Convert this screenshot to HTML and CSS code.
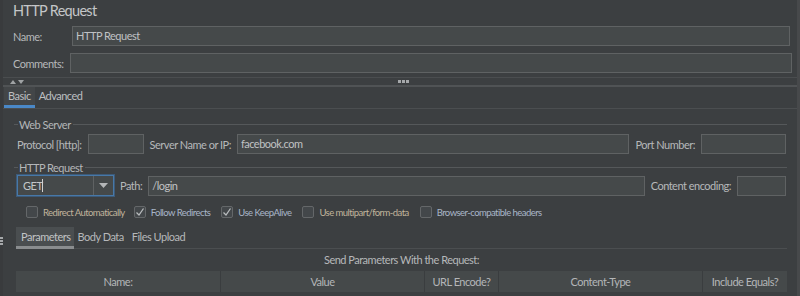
FILE: index.html
```html
<!DOCTYPE html>
<html>
<head>
<meta charset="utf-8">
<link rel="stylesheet" href="styles.css">
</head>
<body>
<div class="window">
  <div class="title">HTTP Request</div>
  <div class="row name-row">
    <span class="lbl name-lbl">Name:</span>
    <div class="field grow">HTTP Request</div>
  </div>
  <div class="row comments-row">
    <span class="lbl comments-lbl">Comments:</span>
    <div class="field grow"></div>
  </div>
  <div class="splitter">
    <div class="split-line"></div>
    <div class="split-mid">
      <svg class="arrows" width="18" height="6" viewBox="0 0 18 6"><path d="M2 5 L5 1 L8 5 Z" fill="#a0a3a5"/><path d="M10 1 L16 1 L13 5 Z" fill="#a0a3a5"/></svg>
      <span class="dots"><i></i><i></i><i></i></span>
    </div>
    <div class="split-line2"></div>
  </div>
  <div class="tabs">
    <div class="tab active">Basic</div>
    <div class="tab">Advanced</div>
  </div>
  <div class="panel">
    <div class="legend first"><span class="leg-pre"></span><span class="leg-text">Web Server</span><span class="leg-line"></span></div>
    <div class="row ws-row">
      <span class="lbl">Protocol [http]:</span>
      <div class="field w-proto"></div>
      <span class="lbl">Server Name or IP:</span>
      <div class="field grow">facebook.com</div>
      <span class="lbl">Port Number:</span>
      <div class="field w-port"></div>
    </div>
    <div class="legend second"><span class="leg-pre"></span><span class="leg-text">HTTP Request</span><span class="leg-line"></span></div>
    <div class="row req-row">
      <div class="combo">
        <span class="combo-val">GET<span class="caret"></span></span>
        <span class="combo-btn"><svg width="9" height="5" viewBox="0 0 9 5"><path d="M0 0 L9 0 L4.5 5 Z" fill="#b4b6b8"/></svg></span>
      </div>
      <span class="lbl">Path:</span>
      <div class="field grow">/login</div>
      <span class="lbl">Content encoding:</span>
      <div class="field w-enc"></div>
    </div>
    <div class="checks">
      <label class="chk"><span class="box"></span><span class="tan">Redirect Automatically</span></label>
      <label class="chk"><span class="box"><svg width="10" height="10" viewBox="0 0 10 10"><path d="M1.5 5.5 L4 8 L8.5 1.5" fill="none" stroke="#b9bcbe" stroke-width="1.3"/></svg></span><span class="blue">Follow Redirects</span></label>
      <label class="chk"><span class="box"><svg width="10" height="10" viewBox="0 0 10 10"><path d="M1.5 5.5 L4 8 L8.5 1.5" fill="none" stroke="#b9bcbe" stroke-width="1.3"/></svg></span><span class="blue">Use KeepAlive</span></label>
      <label class="chk"><span class="box"></span><span class="tan">Use multipart/form-data</span></label>
      <label class="chk"><span class="box"></span><span class="blue">Browser-compatible headers</span></label>
    </div>
    <div class="ptabs">
      <span class="side-dots"><i></i><i></i><i></i></span>
      <div class="ptab active">Parameters</div>
      <div class="ptab">Body Data</div>
      <div class="ptab">Files Upload</div>
      <div class="ptab-fill"></div>
    </div>
    <div class="send">Send Parameters With the Request:</div>
    <div class="thead">
      <div class="th">Name:</div>
      <div class="th">Value</div>
      <div class="th">URL Encode?</div>
      <div class="th">Content-Type</div>
      <div class="th">Include Equals?</div>
    </div>
  </div>
</div>
</body>
</html>
```
FILE: styles.css
```css
* { box-sizing: border-box; }
html, body { margin: 0; padding: 0; }
body {
  width: 800px;
  height: 296px;
  overflow: hidden;
  background: #3c3f41;
  font-family: "Lato", "Open Sans", sans-serif;
  font-size: 11px;
  letter-spacing: -0.5px;
  color: #b6b8ba;
}
.window {
  height: 296px;
  border-left: 3px solid #393b3d;
  border-right: 3px solid #47494b;
  position: relative;
}
.title {
  height: 24px;
  padding-left: 10px;
  font-size: 14.5px;
  letter-spacing: -0.7px;
  line-height: 22px;
  color: #c4c6c8;
}
.row { display: flex; align-items: center; }
.lbl { white-space: nowrap; }
.field {
  height: 20px;
  background: #45494a;
  border: 1px solid #5f6263;
  line-height: 18px;
  padding-left: 3px;
  color: #c0c2c4;
  white-space: nowrap;
}
.grow { flex: 1; }
.name-row { height: 20px; margin-top: 2px; padding-left: 10px; padding-right: 7px; }
.name-lbl { width: 59px; }
.comments-row { height: 20px; margin-top: 7px; padding-left: 10px; padding-right: 5px; }
.comments-lbl { width: 57px; }
.splitter { height: 14px; position: relative; overflow: hidden; }
.split-line { height: 1px; background: #4a4d4f; margin-top: 4px; }
.split-mid { height: 7px; display: flex; align-items: center; position: relative; }
.arrows { margin-left: 5px; }
.dots { position: absolute; left: 395px; top: 2px; display: flex; gap: 1px; }
.dots i, .side-dots i { display: block; width: 3px; height: 3px; background: #a5a8aa; }
.split-line2 { height: 2px; background: #505355; }
.tabs { display: flex; height: 22px; border-bottom: 1px solid #4b4e50; overflow: hidden; }
.tab {
  padding: 0 4px;
  line-height: 18px;
  color: #bdbfc1;
}
.tab.active {
  background: #434648;
  border-bottom: 3px solid #4a88c7;
  margin-left: 1px;
  height: 21px;
}
.panel { padding: 0 10px 0 11px; }
.legend { display: flex; align-items: center; height: 14px; }
.legend.first { margin-top: 8px; }
.legend.second { margin-top: 6px; }
.leg-pre { width: 4px; height: 1px; background: #55585a; }
.leg-text { padding: 0 2px 0 1px; color: #b4b6b8; }
.leg-line { flex: 1; height: 1px; background: #55585a; }
.ws-row { height: 20px; margin-top: 3px; padding-left: 3px; padding-right: 1px; gap: 6px; }
.w-proto { width: 56px; }
.w-port { width: 85px; }
.w-enc { width: 49px; }
.req-row { height: 21px; margin-top: 1px; padding-left: 3px; padding-right: 1px; gap: 6px; }
.combo {
  width: 97px;
  height: 21px;
  border: 1px solid #4778a8;
  box-shadow: 0 0 0 1px #3d5a78;
  background: #45494a;
  display: flex;
}
.combo-val { flex: 1; padding-left: 5px; color: #c4c6c8; display: flex; align-items: center; }
.caret { display: inline-block; width: 1px; height: 13px; background: #d0d0d0; }
.combo-btn { width: 20px; border-left: 1px solid #5f6263; display: flex; align-items: center; justify-content: center; }
.checks { display: flex; height: 14px; margin-top: 9px; padding-left: 12px; align-items: center; }
.chk { display: flex; align-items: center; gap: 5px; font-size: 9.5px; letter-spacing: -0.55px; white-space: nowrap; margin-right: 11px; }
.chk:first-child { margin-right: 9px; }
.box {
  width: 12px; height: 12px;
  border: 1px solid #646769;
  border-radius: 2px;
  background: #43474a;
  display: flex; align-items: center; justify-content: center;
}
.tan { color: #c0b49c; }
.blue { color: #a9b6c8; }
.ptabs { display: flex; height: 22px; margin-top: 8px; position: relative; padding-left: 2px; }
.side-dots { position: absolute; left: -14px; top: 10px; display: flex; flex-direction: column; gap: 1px; }
.side-dots i { width: 3px; height: 2px; }
.ptab { padding: 0 4px; line-height: 20px; color: #b6b8ba; border-bottom: 1px solid #4b4e50; }
.ptab.active { background: #4a4e50; border-bottom: 3px solid #8a8d8f; padding: 0 3px 0 5px; color: #c2c4c6; line-height: 19px; }
.ptab-fill { flex: 1; border-bottom: 1px solid #4b4e50; }
.send { text-align: center; height: 22px; line-height: 22px; padding-left: 2px; }
.thead {
  display: grid;
  grid-template-columns: 205px 204px 74px 204px 1fr;
  height: 21px;
  margin-left: 2px;
  background: #45494a;
}
.th { text-align: center; line-height: 21px; border-right: 1px solid #3a3d3f; color: #b4b6b8; }
.th:last-child { border-right: none; }
```
